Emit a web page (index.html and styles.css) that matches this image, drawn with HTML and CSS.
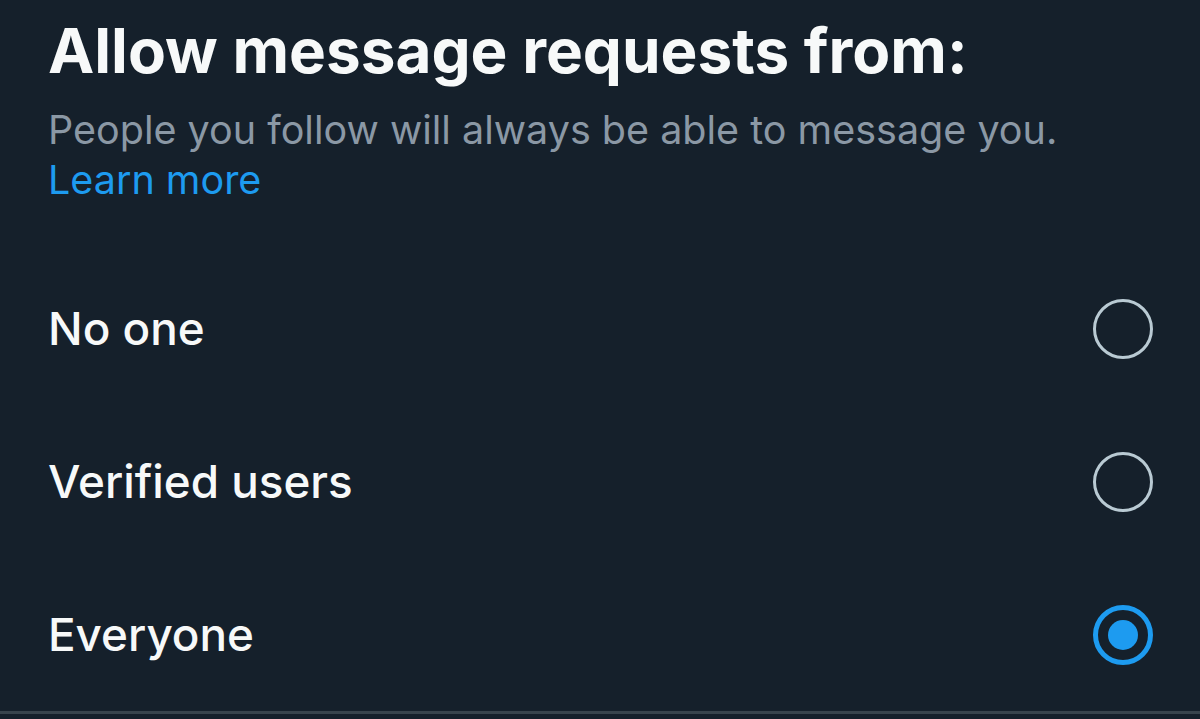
FILE: index.html
```html
<!DOCTYPE html>
<html lang="en">
<head>
<meta charset="utf-8">
<title>Allow message requests</title>
<link rel="stylesheet" href="styles.css">
</head>
<body>
<main class="page">
  <header class="intro">
    <h1 class="title">Allow message requests from:</h1>
    <p class="subtitle">People you follow will always be able to message you. <a class="link" href="#">Learn more</a></p>
  </header>
  <ul class="options">
    <li class="option">
      <span class="label">No one</span>
      <span class="radio"></span>
    </li>
    <li class="option">
      <span class="label">Verified users</span>
      <span class="radio"></span>
    </li>
    <li class="option">
      <span class="label">Everyone</span>
      <span class="radio radio-on"><span class="dot"></span></span>
    </li>
  </ul>
</main>
</body>
</html>
```

FILE: styles.css
```css
* { box-sizing: border-box; }
html, body {
  margin: 0;
  padding: 0;
  background: #15202b;
}
body {
  font-family: Inter, Roboto, "Liberation Sans", sans-serif;
  color: #f7f9f9;
  width: 1200px;
  height: 719px;
  overflow: hidden;
}
.page {
  display: flex;
  flex-direction: column;
  height: 714px;
  border-bottom: 3px solid #38444d;
}
.intro {
  padding: 0 48px;
  height: 252px;
}
.title {
  margin: 0;
  padding-top: 15px;
  font-size: 62px;
  line-height: 72px;
  font-weight: 700;
  letter-spacing: 0;
}
.subtitle {
  margin: 0;
  padding-top: 18px;
  font-size: 39.5px;
  line-height: 50px;
  color: #8b98a5;
  max-width: 1104px;
}
.link {
  color: #1d9bf0;
  text-decoration: none;
}
.options {
  list-style: none;
  margin: 0;
  padding: 0;
}
.option {
  height: 153px;
  display: flex;
  align-items: center;
  justify-content: space-between;
  padding: 0 47px 0 48px;
}
.label {
  font-size: 45.8px;
  font-weight: 500;
}
.radio {
  width: 60px;
  height: 60px;
  border-radius: 50%;
  border: 3px solid #b9cad3;
  display: flex;
  align-items: center;
  justify-content: center;
}
.radio-on {
  border: 5px solid #1d9bf0;
}
.dot {
  width: 30px;
  height: 30px;
  border-radius: 50%;
  background: #1d9bf0;
}
```
